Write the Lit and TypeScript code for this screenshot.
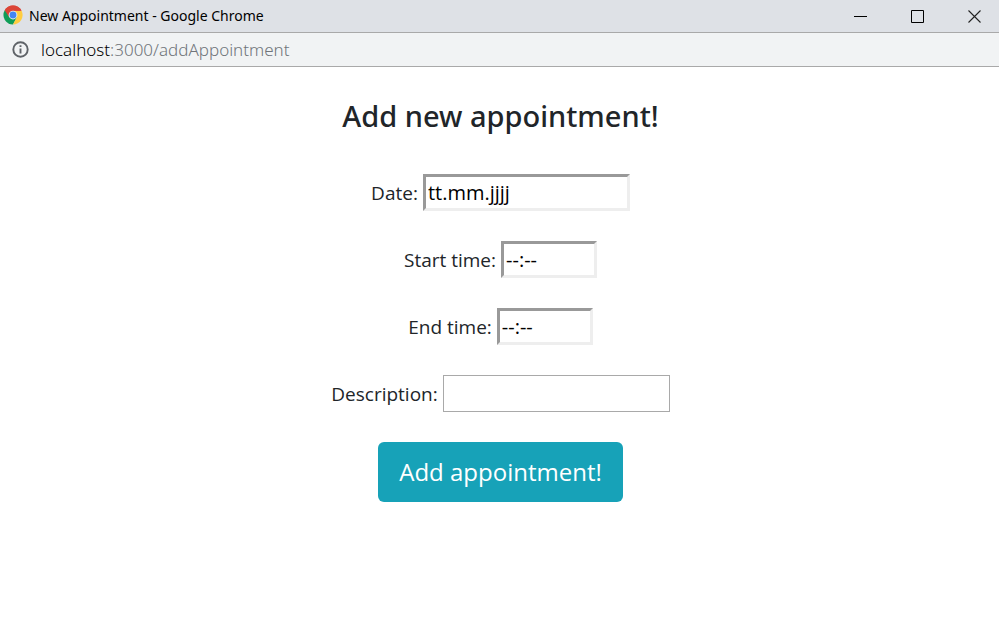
import { LitElement, html, css } from "lit";
import { customElement } from "lit/decorators.js";

@customElement("window-bar")
class WindowBar extends LitElement {
  static styles = css`
    :host {
      display: block;
      font-family: "Noto Sans", sans-serif;
    }
    .title-bar {
      display: flex;
      align-items: center;
      height: 32px;
      background: #dee1e6;
      border-bottom: 1px solid #a9a9a9;
    }
    .logo {
      flex: none;
      margin: 0 6px 2px 3px;
    }
    .title {
      flex: 1;
      font-size: 14px;
      line-height: 20px;
      color: #000;
    }
    .controls {
      display: flex;
      gap: 8px;
    }
    .control {
      display: flex;
      align-items: center;
      justify-content: center;
      width: 49px;
      height: 32px;
      margin: 0;
      padding: 0;
      border: 0;
      background: none;
    }
    .address-bar {
      display: flex;
      align-items: center;
      gap: 12px;
      height: 33px;
      padding-left: 12px;
      background: #f1f3f4;
      border-bottom: 1px solid #a9a9a9;
    }
    .info {
      display: flex;
      margin: 0;
      padding: 0;
      border: 0;
      background: none;
    }
    .url {
      font-size: 17px;
      font-weight: 300;
      line-height: 24px;
      color: #70757a;
    }
    .host {
      color: #000;
    }
  `;

  render() {
    return html`
      <div class="title-bar">
        <svg class="logo" width="20" height="20" viewBox="0 0 48 48" aria-hidden="true">
          <path fill="#db4437" d="M24 24 L4.1 12.5 A23 23 0 0 1 43.9 12.5 Z" />
          <path fill="#0f9d58" d="M24 24 L4.1 12.5 A23 23 0 0 0 24 47 L33.5 29.5 Z" />
          <path fill="#ffcd40" d="M24 13.5 H44.5 A23 23 0 0 1 24 47 L33.1 29.2 Z" />
          <path fill="#db4437" d="M4.1 12.5 L14.9 29.2 L24 13.5 H44.5 L43.9 12.5 A23 23 0 0 0 4.1 12.5 Z" />
          <circle cx="24" cy="24" r="10.5" fill="#f1f1f1" />
          <circle cx="24" cy="24" r="8.3" fill="#4285f4" />
        </svg>
        <div class="title">New Appointment - Google Chrome</div>
        <div class="controls">
          <button class="control" aria-label="Minimize">
            <svg width="13" height="13"><path d="M0 6.5H13" stroke="#000" /></svg>
          </button>
          <button class="control" aria-label="Maximize">
            <svg width="13" height="13"><path d="M.5.5H12.5V12.5H.5Z" fill="none" stroke="#000" /></svg>
          </button>
          <button class="control" aria-label="Close">
            <svg width="13" height="13"><path d="M.5.5L12.5 12.5M12.5.5L.5 12.5" stroke="#222" stroke-width="1.1" /></svg>
          </button>
        </div>
      </div>
      <div class="address-bar">
        <button class="info" aria-label="View site information">
          <svg width="17" height="17" viewBox="0 0 17 17">
            <circle cx="8.5" cy="8.5" r="7.2" fill="none" stroke="#5f6368" stroke-width="1.9" />
            <path d="M8.5 4.2V6M8.5 7.4V12.6" stroke="#5f6368" stroke-width="1.9" />
          </svg>
        </button>
        <div class="url"><span class="host">localhost</span>:3000/addAppointment</div>
      </div>
    `;
  }
}

@customElement("app-root")
class AppRoot extends LitElement {
  static styles = css`
    :host {
      display: block;
      min-height: 100vh;
      background: #fff;
      color: #212529;
      font-family: "Open Sans", "Noto Sans", sans-serif;
    }
    .form {
      display: flex;
      flex-direction: column;
      align-items: center;
      gap: 30px;
      padding: 31px 15px 31px 17px;
    }
    .heading {
      margin: 0 0 10px;
      font-family: "Noto Sans", sans-serif;
      font-size: 29px;
      line-height: 36px;
      font-weight: 500;
    }
    .row {
      display: flex;
      align-items: center;
      gap: 5px;
    }
    .label {
      font-size: 19px;
      line-height: 30px;
    }
    .field {
      box-sizing: border-box;
      height: 37px;
      margin: 0;
      padding: 0 2px;
      border: 3px solid;
      border-color: #999 #eee #eee #999;
      border-radius: 0;
      background: #fff;
      color: #000;
      font-family: inherit;
      font-size: 20px;
    }
    .field::placeholder {
      color: #000;
      opacity: 1;
    }
    .date {
      width: 207px;
    }
    .time {
      width: 96px;
    }
    .description {
      width: 227px;
      border: 1px solid #a9a9a9;
    }
    .submit {
      height: 60px;
      margin: 0;
      padding: 0 21px;
      border: 0;
      border-radius: 6px;
      background: #17a2b8;
      color: #fff;
      font-family: inherit;
      font-size: 24px;
      line-height: 36px;
    }
  `;

  render() {
    return html`
      <window-bar></window-bar>
      <form class="form" @submit=${(e: Event) => e.preventDefault()}>
        <h1 class="heading">Add new appointment!</h1>
        <div class="row">
          <label class="label" for="date">Date:</label>
          <input class="field date" id="date" placeholder="tt.mm.jjjj" />
        </div>
        <div class="row">
          <label class="label" for="start">Start time:</label>
          <input class="field time" id="start" placeholder="--:--" />
        </div>
        <div class="row">
          <label class="label" for="end">End time:</label>
          <input class="field time" id="end" placeholder="--:--" />
        </div>
        <div class="row">
          <label class="label" for="description">Description:</label>
          <input class="field description" id="description" type="text" />
        </div>
        <button class="submit" type="submit">Add appointment!</button>
      </form>
    `;
  }
}
